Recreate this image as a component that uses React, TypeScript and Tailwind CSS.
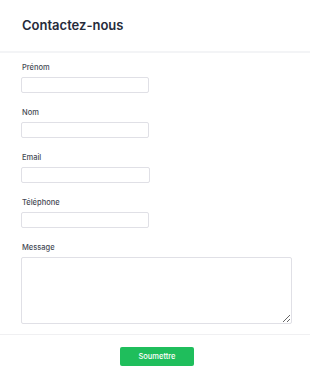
import React from "react";

const fields = [
  { label: "Prénom", width: "w-[128px]" },
  { label: "Nom", width: "w-[128px]" },
  { label: "Email", width: "w-[129px]" },
  { label: "Téléphone", width: "w-[128px]" },
];

export default function App() {
  return (
    <div className="w-[310px] min-h-[383px] bg-white font-['Inter',sans-serif] text-[#1f2937]">
      {/* Header */}
      <div className="px-[22px] pt-[16px] pb-[16px] border-b-2 border-[#f3f4f6]">
        <h1 className="text-[13px] leading-[19px] font-semibold text-[#262b3a]">Contactez-nous</h1>
      </div>

      {/* Form */}
      <form className="pl-[21px] pr-[18px] pt-[10px]" onSubmit={(e) => e.preventDefault()}>
        {fields.map((f) => (
          <div key={f.label} className="mb-[15px]">
            <label className="block text-[7.5px] leading-[10px] font-medium text-[#464a55] mb-[4px] pl-[1px]">
              {f.label}
            </label>
            <input
              type="text"
              className={`block ${f.width} h-[16px] border border-[#e0e0e6] rounded-[2px] bg-white outline-none`}
            />
          </div>
        ))}
        <div>
          <label className="block text-[7.5px] leading-[10px] font-medium text-[#464a55] mb-[4px] pl-[1px]">
            Message
          </label>
          <textarea className="block w-[271px] h-[67px] border border-[#e0e0e6] rounded-[2px] bg-white outline-none resize-y" />
        </div>
      </form>

      <div className="mt-[10px] border-t border-[#f0f0f2]" />

      <div className="flex justify-center pl-[4px] pt-[12px] pb-[17px]">
        <button className="w-[74px] h-[19px] rounded-[2px] bg-[#1fbe5c] text-white text-[7.5px] font-medium">
          Soumettre
        </button>
      </div>
    </div>
  );
}
